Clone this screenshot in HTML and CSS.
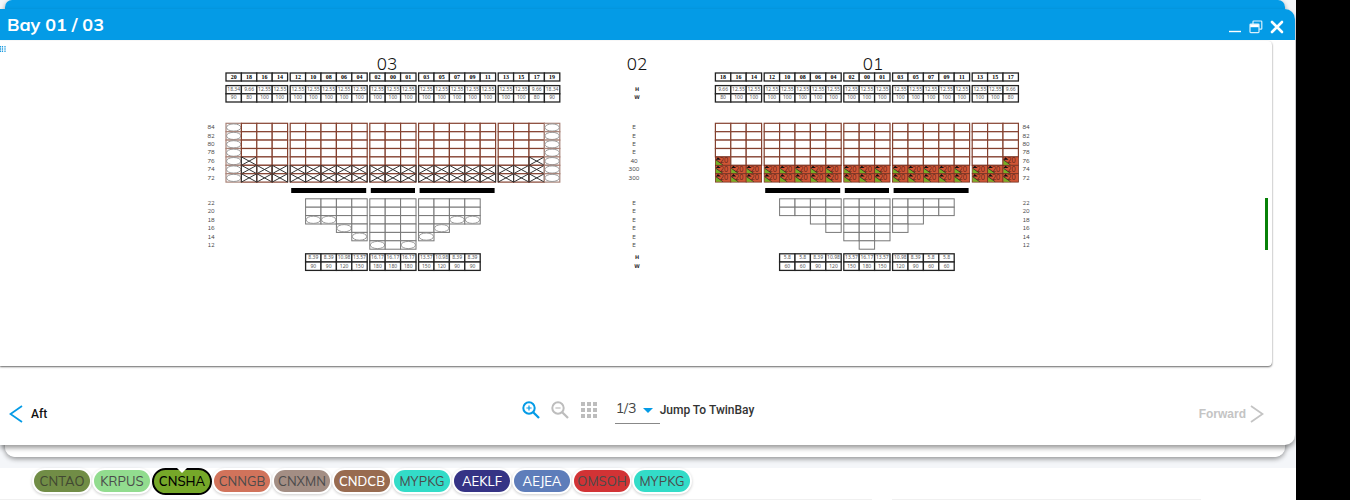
FILE: index.html
```html
<!DOCTYPE html>
<html lang="en">
<head>
<meta charset="utf-8">
<title>Bay 01 / 03</title>
<link rel="stylesheet" href="styles.css">
</head>
<body>
<div class="stage">
  <section class="window-back">
    <article class="window">
      <header class="titlebar">
        <h1 class="title">Bay 01 / 03</h1>
        <div class="window-actions">
          <button class="icon-button" type="button" aria-label="Minimize">
            <svg width="14" height="14" viewBox="0 0 14 14"><path d="M1 11.5H13" stroke="#fff" stroke-width="1.4"/></svg>
          </button>
          <button class="icon-button" type="button" aria-label="Restore">
            <svg width="14" height="14" viewBox="0 0 14 14" fill="none" stroke="#d9f0fc" stroke-width="1.2"><path d="M4 4V1.8Q4 1 4.8 1H12Q12.8 1 12.8 1.8V8.4Q12.8 9.2 12 9.2H10.2"/><rect x="1" y="4" width="9" height="8.6" rx=".8"/><path d="M1.2 5.7H9.8" stroke="#fff" stroke-width="3"/></svg>
          </button>
          <button class="icon-button" type="button" aria-label="Close">
            <svg width="14" height="14" viewBox="0 0 14 14"><path d="M2 2L12 12M12 2L2 12" stroke="#fff" stroke-width="2.6" stroke-linecap="round"/></svg>
          </button>
        </div>
      </header>
      <main class="plan">
        <button class="plan-handle" type="button" aria-label="Show panel">
          <svg width="6" height="6" viewBox="0 0 6 6"><path d="M.5 0V6M2.5 0V6M5 0V6" stroke="#1c9be0" stroke-width="1.2" stroke-dasharray="1.6 .6"/></svg>
        </button>
        <svg class="plan-drawing" id="plan" viewBox="0 41 1265 325" role="img" aria-label="Stowage plan of bays 03, 02 and 01"></svg>
        <div class="plan-scroll"></div>
      </main>
      <footer class="toolbar">
        <button class="nav-button" type="button">
          <svg width="14" height="18" viewBox="0 0 14 18"><path d="M13 1L1.5 9L13 17" fill="none" stroke="#049be6" stroke-width="1.8"/></svg>
          Aft
        </button>
        <div class="tools">
          <button class="icon-button" type="button" aria-label="Zoom in">
            <svg width="18" height="18" viewBox="0 0 18 18" fill="none" stroke="#049be6"><circle cx="7" cy="7" r="5.7" stroke-width="2"/><path d="M11.2 11.2L17 17" stroke-width="2.3"/><path d="M4.4 7H9.6M7 4.4V9.6" stroke-width="1.2"/></svg>
          </button>
          <button class="icon-button" type="button" aria-label="Zoom out">
            <svg width="18" height="18" viewBox="0 0 18 18" fill="none" stroke="#bdbdbd"><circle cx="7" cy="7" r="5.7" stroke-width="2"/><path d="M11.2 11.2L17 17" stroke-width="2.3"/><path d="M4.4 7H9.6" stroke-width="1.2"/></svg>
          </button>
          <button class="icon-button" type="button" aria-label="Grid view">
            <svg width="18" height="18" viewBox="0 0 18 18" fill="#bdbdbd"><path d="M1 1h4v4H1zM7 1h4v4H7zM13 1h4v4h-4zM1 7h4v4H1zM7 7h4v4H7zM13 7h4v4h-4zM1 13h4v4H1zM7 13h4v4H7zM13 13h4v4h-4z"/></svg>
          </button>
          <div class="jump">
            <span class="jump-field">
              <select class="jump-select" id="jump"><option>1/3</option></select>
              <svg class="jump-caret" width="10" height="5" viewBox="0 0 10 5"><path d="M0 0H10L5 5Z" fill="#049be6"/></svg>
            </span>
            <label class="jump-label" for="jump">Jump To TwinBay</label>
          </div>
        </div>
        <button class="nav-button nav-forward" type="button" disabled>
          Forward
          <svg width="14" height="18" viewBox="0 0 14 18"><path d="M1 1L12.5 9L1 17" fill="none" stroke="#c4c4c4" stroke-width="1.8"/></svg>
        </button>
      </footer>
    </article>
  </section>
  <nav class="ports" aria-label="Ports">
    <button class="port port-cntao" type="button">CNTAO</button>
    <button class="port port-krpus" type="button">KRPUS</button>
    <button class="port port-selected" type="button">CNSHA</button>
    <button class="port port-cnngb" type="button">CNNGB</button>
    <button class="port port-cnxmn" type="button">CNXMN</button>
    <button class="port port-cndcb" type="button">CNDCB</button>
    <button class="port port-mypkg" type="button">MYPKG</button>
    <button class="port port-aeklf" type="button">AEKLF</button>
    <button class="port port-aejea" type="button">AEJEA</button>
    <button class="port port-omsoh" type="button">OMSOH</button>
    <button class="port port-mypkg" type="button">MYPKG</button>
  </nav>
  <div class="cards"><div class="card"></div><div class="card"></div></div>
</div>
<aside class="side"></aside>
<script src="plan.js"></script>
</body>
</html>
```
FILE: styles.css
```css
* { box-sizing: border-box; }
body {
  margin: 0;
  min-height: 100vh;
  display: grid;
  grid-template-columns: 1fr 54px;
  overflow: hidden;
  background: #f4f6f9;
  font-family: Mulish, Nunito, Lato, sans-serif;
}
button {
  border: 0;
  padding: 0;
  margin: 0;
  background: none;
  font: inherit;
  color: inherit;
}
svg { display: block; }
.stage { min-width: 0; overflow: hidden; }
.side { background: #000; }

.window-back {
  margin: 0 11px 0 5px;
  padding: 9px 0 12px;
  border-radius: 7px 7px 10px 10px;
  background: linear-gradient(#049be6 0 40px, #fff 40px);
  box-shadow: 0 2px 5px rgba(0, 0, 0, .4);
}
.window {
  margin: 0 -10px 0 -5px;
  border-radius: 0 10px 10px 0;
  background: #fff;
  box-shadow: 0 3px 5px rgba(0, 0, 0, .4);
}
.titlebar {
  display: flex;
  justify-content: space-between;
  align-items: center;
  height: 31px;
  padding: 0 11px 0 7px;
  border-radius: 0 10px 0 0;
  background: #049be6;
  color: #fff;
}
.title { margin: 0; font: 700 18px/24px Mulish, Nunito, "Open Sans", sans-serif; }
.window-actions { display: flex; gap: 7px; padding-top: 4px; }
.icon-button { display: block; }

.plan {
  position: relative;
  display: flex;
  align-items: center;
  margin: 1px 23px 0 0;
  padding-right: 4px;
  border-radius: 0 4px 4px 0;
  background: #fff;
  box-shadow: 0 1px 2px rgba(0, 0, 0, .6);
}
.plan-handle { position: absolute; left: 0; top: 5px; }
.plan-drawing { flex: 1; min-width: 0; }
.plan-scroll { width: 3px; height: 52px; margin-bottom: -40px; background: #078107; }

.slot-number { font: 700 6px "Liberation Serif", serif; text-anchor: middle; }
.slot-value { font: 400 5px "Noto Sans", sans-serif; text-anchor: middle; fill: #555; }
.tier-label { font: 400 6px Mulish, Nunito, "Noto Sans", sans-serif; text-anchor: middle; fill: #444; }
.axis-label { font: 700 5px "DejaVu Sans", sans-serif; text-anchor: middle; fill: #333; }
.bay-label { font: 300 17px Mulish, Nunito, "Open Sans", sans-serif; text-anchor: middle; fill: #111; }
.load-label { font: 400 7px Mulish, Nunito, "Noto Sans", sans-serif; text-anchor: middle; fill: #58241a; }
.scale { fill: #fff; stroke: #222; stroke-width: 1.3; }
.deck { fill: #fff; stroke: #84412f; stroke-width: 1.2; }
.hold { fill: #fff; stroke: #777; stroke-width: 1; }
.end { fill: #fff; stroke: #a98378; stroke-width: 1.2; }
.oval { fill: none; stroke: #999; stroke-width: 1; }
.cross { fill: none; stroke: #333; stroke-width: 1; }
.load { fill: #d05535; stroke: #743222; stroke-width: .8; }
.load-port { fill: #76b027; }
.load-mark { fill: #111; }
.load-line { stroke: #222; stroke-width: .7; }
.hatch { fill: #000; }

.toolbar {
  display: grid;
  grid-template-columns: 1fr auto 1fr;
  align-items: center;
  padding: 24px 31px 8px 9px;
  height: 79px;
}
.nav-button {
  display: flex;
  align-items: center;
  gap: 8px;
  font: 500 12px/18px Roboto, sans-serif;
  color: #111;
}
.nav-forward { justify-self: end; gap: 4px; font: 700 12px/18px "Liberation Sans", sans-serif; color: #c4c4c4; }
.tools { display: flex; align-items: center; gap: 11px; padding: 0 0 7px 3px; }
.jump { display: flex; align-items: center; margin-left: 6px; }
.jump-field { display: flex; align-items: center; width: 45px; height: 28px; border-bottom: 1px solid #888; }
.jump-select {
  flex: 1;
  min-width: 0;
  appearance: none;
  border: 0;
  padding: 0 0 4px 1px;
  background: none;
  font: 400 14px/20px Mulish, Nunito, "Open Sans", sans-serif;
  color: #444;
}
.jump-caret { margin: 2px 7px 0 0; }
.jump-label { font: 500 12px/18px Roboto, sans-serif; color: #333; }

.ports {
  display: flex;
  align-items: center;
  gap: 4px;
  margin-top: 11px;
  padding: 0 34px 1px;
  height: 27px;
  background: #fff;
}
.port {
  width: 56px;
  height: 22px;
  border-radius: 11px;
  box-shadow: 0 0 0 2px #fff, 0 1px 3px 2px rgba(0, 0, 0, .2);
  font-size: 13px;
  line-height: 22px;
  white-space: nowrap;
  overflow: hidden;
  color: #4b4b4b;
}
.port-cntao { background: #718d46; color: #414832; }
.port-krpus { background: #92dc8f; }
.port-cnngb { background: #d1735b; }
.port-cnxmn { background: #a38e84; }
.port-cndcb { background: #986b50; color: #fff; font-weight: 500; }
.port-mypkg { background: #33dcc8; }
.port-aeklf { background: #353385; color: #fff; font-weight: 500; }
.port-aejea { background: #5e7dba; color: #fff; font-weight: 500; }
.port-omsoh { background: #d23335; }
.port-selected {
  position: relative;
  width: 60px;
  height: 27px;
  margin: 0 -2px;
  border: 2px solid #000;
  border-radius: 14px;
  background: #76a829;
  box-shadow: none;
  font-weight: 500;
  line-height: 23px;
  color: #000;
  overflow: visible;
}
.port-selected::before {
  content: "";
  position: absolute;
  top: -2px;
  left: 50%;
  margin-left: -5px;
  border: 5px solid transparent;
  border-top-color: #fff;
  border-bottom: 0;
}
.cards { display: grid; grid-template-columns: 872fr 309fr 75fr; gap: 20px; height: 5px; padding-top: 4px; background: #fff; }
.card { height: 1px; background: #f0f0f0; }
```
FILE: plan.js
```js
const svg = document.getElementById("plan");
const PITCH = 15.4, GROUP_GAP = 2.6, TIER = 8.4;
const DECK_TOP = 123.3, HOLD_TOP = 198.8;
const DECK_TIERS = ["84", "82", "80", "78", "76", "74", "72"];
const HOLD_TIERS = ["22", "20", "18", "16", "14", "12"];

function add(name, attrs, text) {
  const node = document.createElementNS("http://www.w3.org/2000/svg", name);
  for (const key in attrs) node.setAttribute(key, attrs[key]);
  if (text !== undefined) node.textContent = text;
  svg.appendChild(node);
}
function box(cls, x, y, w, h) { add("rect", { class: cls, x, y, width: w, height: h }); }
function label(cls, x, y, text) { add("text", { class: cls, x, y }, text); }

function drawCell(kind, x, y) {
  if (kind === "load") {
    box("load", x, y, PITCH, TIER);
    add("path", { class: "load-port", d: `M${x + .5} ${y + 3}L${x + 7.5} ${y + 8}H${x + .5}Z` });
    add("path", { class: "load-line", d: `M${x + .5} ${y + 3}L${x + 7.5} ${y + 8}` });
    add("path", { class: "load-mark", d: `M${x + .5} ${y + 2.8}L${x + 2.5} ${y + .4}L${x + 5.5} ${y + 2.8}Z` });
    label("load-label", x + 8.5, y + 6.5, "20");
    return;
  }
  box(kind === "oval" ? "hold" : kind, x, y, PITCH, TIER);
  if (kind === "oval" || kind === "end")
    add("ellipse", { class: "oval", cx: x + PITCH / 2, cy: y + TIER / 2, rx: 7.2, ry: 3.6 });
}
function drawCross(x, y) {
  add("path", { class: "cross", d: `M${x} ${y}l${PITCH} ${TIER}M${x + PITCH} ${y}l${-PITCH} ${TIER}M${x} ${y}v${TIER}M${x + PITCH} ${y}v${TIER}` });
}

function drawBay(bay) {
  const at = {};
  let x = bay.left;
  bay.groups.forEach(group => {
    const start = x;
    for (const slot of group) { at[slot] = x; x += PITCH; }
    if (group.includes("12") || group.includes("00") || group.includes("11"))
      box("hatch", start + 1, 188, x - start - 2, 5);
    x += GROUP_GAP;
  });
  const slots = bay.groups.flat();
  label("bay-label", bay.center, 70, bay.name);
  for (const slot of slots) {
    const sx = at[slot], mid = sx + PITCH / 2;
    const outer = slot === "20" || slot === "19", edge = slot === "18" || slot === "17";
    box("scale", sx, 73, PITCH, 8);
    label("slot-number", mid, 79, slot);
    box("scale", sx, 85.6, PITCH, 8.2);
    box("scale", sx, 93.8, PITCH, 8.2);
    label("slot-value", mid, 91.3, outer ? "18.34" : edge ? "9.66" : "12.55");
    label("slot-value", mid, 99.3, outer ? "90" : edge ? "80" : "100");
    DECK_TIERS.forEach((tier, i) => {
      const y = DECK_TOP + i * TIER;
      const filled = !outer && (i > 4 || (i === 4 && edge));
      drawCell(outer ? "end" : filled && bay.loaded ? "load" : "deck", sx, y);
      if (filled && !bay.loaded) drawCross(sx, y);
    });
  }
  bay.hold.forEach((tier, i) => {
    tier.cells.forEach(slot => {
      drawCell(tier.ovals.includes(slot) ? "oval" : "hold", at[slot], HOLD_TOP + i * TIER);
    });
  });
  holdSlots.forEach((slot, i) => {
    box("scale", at[slot], 253.8, PITCH, 8.2);
    box("scale", at[slot], 262, PITCH, 8.4);
    label("slot-value", at[slot] + PITCH / 2, 259.4, bay.holdHeights[i]);
    label("slot-value", at[slot] + PITCH / 2, 268, bay.holdWeights[i]);
  });
  DECK_TIERS.forEach((t, i) => label("tier-label", bay.tierX, 129.2 + i * TIER, t));
  HOLD_TIERS.forEach((t, i) => label("tier-label", bay.tierX, 205 + i * TIER, t));
}

const holdSlots = ["10", "08", "06", "04", "02", "00", "01", "03", "05", "07", "09"];
const tier = (from, to, ovals = []) => ({ cells: holdSlots.slice(from, to), ovals });
const middle = [["12", "10", "08", "06", "04"], ["02", "00", "01"], ["03", "05", "07", "09", "11"]];

drawBay({
  name: "03", left: 226, center: 387, tierX: 211, loaded: false,
  groups: [["20", "18", "16", "14"], ...middle, ["13", "15", "17", "19"]],
  hold: [tier(0, 11), tier(0, 11), tier(0, 11, ["10", "08", "07", "09"]), tier(2, 9, ["06", "05"]), tier(3, 8, ["04", "03"]), tier(4, 7, ["02", "01"])],
  holdHeights: ["8.39", "8.39", "10.98", "13.57", "16.17", "16.17", "16.17", "13.57", "10.98", "8.39", "8.39"],
  holdWeights: [90, 90, 120, 150, 180, 180, 180, 150, 120, 90, 90]
});
drawBay({
  name: "01", left: 715.4, center: 873, tierX: 1026, loaded: true,
  groups: [["18", "16", "14"], ...middle, ["13", "15", "17"]],
  hold: [tier(0, 11), tier(0, 11), tier(2, 9), tier(3, 8), tier(4, 7), tier(5, 6)],
  holdHeights: ["5.8", "5.8", "8.39", "10.98", "13.57", "16.17", "13.57", "10.98", "8.39", "5.8", "5.8"],
  holdWeights: [60, 60, 90, 120, 150, 180, 150, 120, 90, 60, 60]
});

label("bay-label", 637, 70, "02");
[["H", 91], ["W", 99], ["H", 259], ["W", 268]].forEach(([t, y]) => label("axis-label", 637, y, t));
["E", "E", "E", "E", "40", "300", "300"].forEach((t, i) => label("tier-label", 634, 129.2 + i * TIER, t));
HOLD_TIERS.forEach((t, i) => label("tier-label", 634, 205 + i * TIER, "E"));
```
